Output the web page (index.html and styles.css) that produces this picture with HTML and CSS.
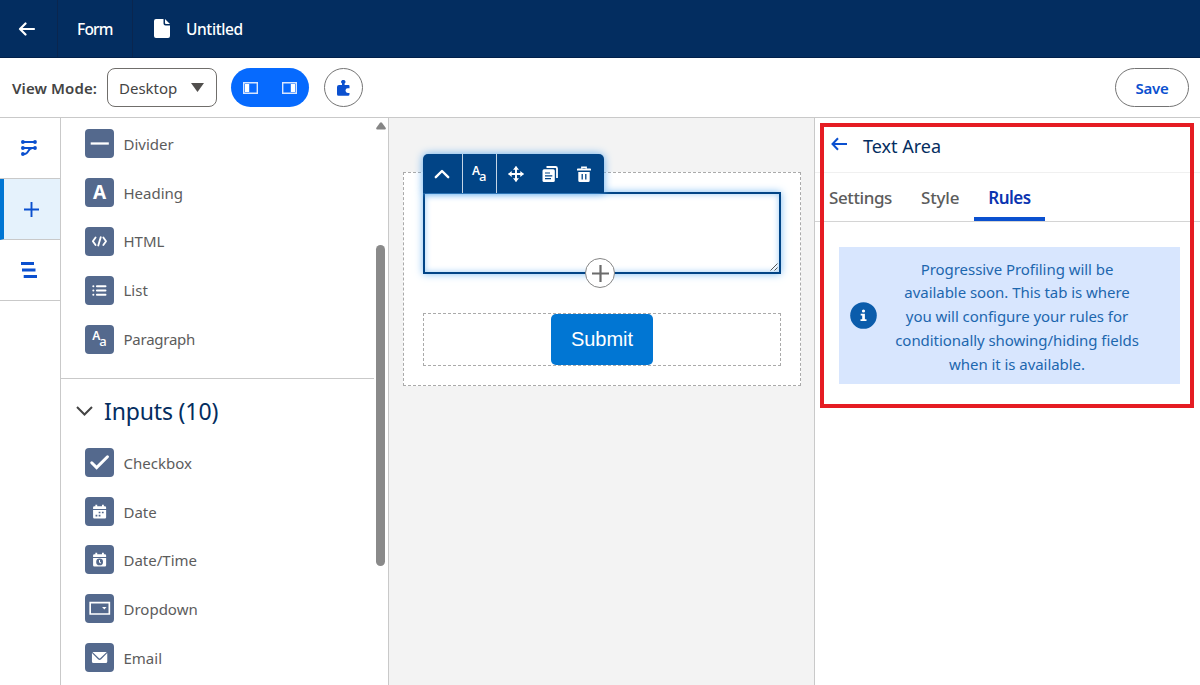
FILE: index.html
```html
<!DOCTYPE html>
<html lang="en">
<head>
<meta charset="utf-8">
<title>Form – Untitled</title>
<link rel="stylesheet" href="styles.css">
</head>
<body>
<div class="app">
  <header class="topbar">
    <div class="topbar-back"><svg width="18" height="14" viewBox="0 0 18 14" class="stroke"><path d="M16 7H2M7.500 1.500 2 7l5.500 5.500" stroke-width="2.200"/></svg></div>
    <div class="topbar-form"><span class="t-form">Form</span></div>
    <div class="topbar-title">
      <svg width="16" height="19" viewBox="0 0 16 19" fill="currentColor"><path d="M2 0h7.500v4.500a2 2 0 0 0 2 2H16V17a2 2 0 0 1-2 2H2a2 2 0 0 1-2-2V2a2 2 0 0 1 2-2zM11 0l5 5h-4a1 1 0 0 1-1-1z"/></svg>
      <span class="t-untitled">Untitled</span>
    </div>
  </header>

  <div class="toolbar">
    <span class="mode-label">View Mode:</span>
    <div class="select"><span>Desktop</span><svg width="13" height="9" viewBox="0 0 13 9"><path d="M0 0h13L6.500 9z" fill="#514f4d"/></svg></div>
    <div class="toggle">
      <svg width="15" height="12" viewBox="0 0 15 12"><path d="M.7.7h13.600v10.600H.7z" fill="none" stroke="#d8e6fe" stroke-width="1.400"/><path d="M2 2h4.200v8H2z" fill="#fff"/></svg>
      <svg width="15" height="12" viewBox="0 0 15 12"><path d="M.7.7h13.600v10.600H.7z" fill="none" stroke="#d8e6fe" stroke-width="1.400"/><path d="M8.800 2H13v8H8.800z" fill="#fff"/></svg>
    </div>
    <div class="round"><svg width="13" height="16" viewBox="0 0 13 16" fill="#0b50cf"><path d="M5 5V3.600a2.100 2.100 0 1 1 2.600 0V5h3.900a1 1 0 0 1 1 1v2.300h-1.700a2.300 2.300 0 1 0 0 4.600h1.700v1.300a1.500 1.500 0 0 1-1.500 1.500H1.500A1.500 1.500 0 0 1 0 14.200V7a2 2 0 0 1 2-2z"/></svg></div>
    <button class="save">Save</button>
  </div>

  <main class="workspace">
    <nav class="rail">
      <div class="rail-item"><svg width="16" height="16" viewBox="0 0 16 16" fill="none" stroke="#0b50cf" stroke-width="2"><path d="M2 2h12M2 8h12M2 14h1.500c4.500 0 3-6 8-6"/><g fill="#0b50cf" stroke="none"><circle cx="1.900" cy="2" r="1.900"/><circle cx="14" cy="2" r="1.900"/><circle cx="1.900" cy="8" r="1.900"/><circle cx="14" cy="8" r="1.900"/><circle cx="1.900" cy="14" r="1.900"/></g></svg></div>
      <div class="rail-item active"><svg width="15" height="15" viewBox="0 0 15 15"><path d="M7.500 0v15M0 7.500h15" stroke="#0b50cf" stroke-width="1.900"/></svg></div>
      <div class="rail-item"><svg width="16" height="16" viewBox="0 0 16 16" fill="#0b50cf"><path d="M0 0h13v3H0zM1 6.400h13.500v3H1zM2.700 13H16v3H2.700z"/></svg></div>
    </nav>

    <section class="palette">
      <div class="palette-list">
        <div class="group group-first">
          <div class="item"><span class="tile"><svg viewBox="0 0 28 28"><path d="M5.500 14h17.500" stroke="#fff" stroke-width="2.200"/></svg></span><span>Divider</span></div>
          <div class="item"><span class="tile letter">A</span><span>Heading</span></div>
          <div class="item"><span class="tile"><svg viewBox="0 0 28 28" class="stroke"><path d="M10.200 10.200 7.600 13.800l2.600 3.600M17.700 10.200l2.600 3.600-2.600 3.600M15.200 9.900l-2.400 7.900" stroke-width="1.800"/></svg></span><span>HTML</span></div>
          <div class="item"><span class="tile"><svg viewBox="0 0 28 28" class="stroke"><path d="M11.500 10h8.300M11.500 14h8.300M11.500 18h8.300M8 10h.1M8 14h.1M8 18h.1" stroke-width="1.900"/></svg></span><span>List</span></div>
          <div class="item"><span class="tile aa"><b>A</b><i>a</i></span><span class="tight">Paragraph</span></div>
        </div>
        <div class="group group-inputs">
          <h2 class="group-title"><svg width="17" height="10" viewBox="0 0 17 10"><path d="m1 1 7.500 7.500L16 1" fill="none" stroke="#444" stroke-width="2"/></svg><span>Inputs (10)</span></h2>
          <div class="item"><span class="tile"><svg viewBox="0 0 28 28"><path d="m6.500 14.300 4.700 4.700L21.700 8.500" fill="none" stroke="#fff" stroke-width="2.900" stroke-linecap="round"/></svg></span><span>Checkbox</span></div>
          <div class="item"><span class="tile"><svg viewBox="0 0 28 28"><path d="M9 9h1V7.500h1.800V9h4.600V7.500h1.800V9h1a1.200 1.200 0 0 1 1.200 1.200V11.500H7.800V10.200A1.200 1.200 0 0 1 9 9zM7.800 12.500h12.600V19.500a1.200 1.200 0 0 1-1.200 1.200H9a1.200 1.200 0 0 1-1.200-1.200z" fill="#fff"/><path d="M13.200 14.200h1.700v1.600h-1.700zM16.300 14.200H18v1.600h-1.700zM10.200 17.200h1.700v1.600h-1.700zM13.200 17.200h1.700v1.600h-1.700z" fill="#54698d"/></svg></span><span>Date</span></div>
          <div class="item"><span class="tile"><svg viewBox="0 0 28 28"><path d="M9 9h1V7.500h1.800V9h4.600V7.500h1.800V9h1a1.200 1.200 0 0 1 1.200 1.200V11.500H7.800V10.200A1.200 1.200 0 0 1 9 9zM7.800 12.500h12.600V19.500a1.200 1.200 0 0 1-1.200 1.200H9a1.200 1.200 0 0 1-1.200-1.200z" fill="#fff"/><circle cx="14.100" cy="16.300" r="3.300" fill="#54698d"/><path d="M14 14.500v2l1.300 1" fill="none" stroke="#fff"/></svg></span><span>Date/Time</span></div>
          <div class="item"><span class="tile"><svg viewBox="0 0 28 28"><path d="M5 8.300h18.500v11H5z" fill="none" stroke="#fff" stroke-width="1.600"/><path d="M16.500 12.500h4.300l-2.150 2.500z" fill="#fff"/></svg></span><span>Dropdown</span></div>
          <div class="item"><span class="tile"><svg viewBox="0 0 28 28" fill="#fff"><path d="M7.200 8.600h13.800l-6.300 6.100a.9.900 0 0 1-1.200 0zM6.700 9.700l5.900 6a2.100 2.100 0 0 0 3 0l5.900-6v8.200a1.500 1.500 0 0 1-1.500 1.500H8.200a1.500 1.500 0 0 1-1.500-1.500z"/></svg></span><span>Email</span></div>
        </div>
      </div>
      <div class="scrollbar"><svg width="10" height="8" viewBox="0 0 10 8"><path d="M4 .8q1-1.200 2 0L9.800 6q.3 1.500-1 1.500H1.200Q0 7.500.2 6z" fill="#858585"/></svg><div class="thumb"></div></div>
    </section>

    <section class="canvas">
      <div class="form-box">
        <div class="textarea-block">
          <div class="block-tools">
            <span class="tool"><svg width="16" height="10" viewBox="0 0 16 10" class="stroke"><path d="M1.800 8.200 8 2l6.200 6.200" stroke-width="2.400"/></svg></span>
            <span class="tool tool-aa aa"><b>A</b><i>a</i></span>
            <span class="tool tool-plain"><svg width="16" height="16" viewBox="0 0 16 16" class="stroke"><path d="M8 1.500v13M1.500 8h13" stroke-width="1.900"/><path d="M8 0 11 3.700H5zM8 16l3-3.700H5zM0 8l3.700-3v6zM16 8l-3.700-3v6z" fill="currentColor" stroke="none"/></svg></span>
            <span class="tool tool-plain"><svg width="16" height="16" viewBox="0 0 16 16"><path d="M4.500 1h9A1.500 1.500 0 0 1 15 2.500V12" fill="none" stroke="#fff" stroke-width="1.800"/><rect x=".5" y="3.300" width="12.300" height="12.700" rx="1.500" fill="#fff"/><path d="M3 7h5M3 9.800h7.300M3 12.600h6" stroke="#014486" stroke-width="1.200"/></svg></span>
            <span class="tool tool-plain"><svg width="14" height="16" viewBox="0 0 14 16"><path d="M4.800 2.700V1.200h4.400v1.500" fill="none" stroke="#fff" stroke-width="1.400"/><path d="M.8 2.400h12.400a.8.800 0 0 1 .8.800v1.300H0V3.200a.8.800 0 0 1 .8-.8zM1.300 5.900h11.400V14.500a1.500 1.500 0 0 1-1.500 1.500H2.800a1.500 1.500 0 0 1-1.500-1.500z" fill="#fff"/><path d="M5.200 8v5.500M8.800 8v5.500" stroke="#014486" stroke-width="1.300"/></svg></span>
          </div>
          <div class="textarea"><svg class="grip" width="8" height="8" viewBox="0 0 8 8"><path d="M.5 7.500l7-7M4.500 7.500l3-3" stroke="#555" stroke-width="1"/></svg></div>
          <div class="add"><svg width="17" height="17" viewBox="0 0 17 17"><path d="M8.500 0v17M0 8.500h17" stroke="#6b6b6b" stroke-width="2.200"/></svg></div>
        </div>
        <div class="submit-block"><button class="submit">Submit</button></div>
      </div>
    </section>

    <aside class="panel">
      <div class="panel-head"><svg width="17" height="14" viewBox="0 0 17 14"><path d="M16 7H1.800M7 1.300 1.500 7 7 12.700" fill="none" stroke="#0b50cf" stroke-width="2"/></svg><span>Text Area</span></div>
      <div class="tabs"><span class="tab tab-settings">Settings</span><span class="tab tab-style">Style</span><span class="tab tab-rules">Rules</span></div>
      <div class="notice">
        <svg width="27" height="27" viewBox="0 0 27 27"><circle cx="13.500" cy="13.500" r="13.300" fill="#0b5cab"/><circle cx="13.500" cy="9" r="1.600" fill="#fff"/><path d="M10.700 11.800h4.200v5.400h1.600V19h-6v-1.800h1.700v-3.600h-1.500z" fill="#fff"/></svg>
        <p><span>Progressive Profiling will be</span><span>available soon. This tab is where</span><span>you will configure your rules for</span><span>conditionally showing/hiding fields</span><span>when it is available.</span></p>
      </div>
      <div class="highlight"></div>
    </aside>
  </main>
</div>
</body>
</html>
```

FILE: styles.css
```css
* { box-sizing: border-box; }
body { margin: 0; font-family: "Noto Sans", "Open Sans", sans-serif; color: #444; }
svg { display: block; flex: none; }
button { font: inherit; padding: 0; }
.stroke { fill: none; stroke: currentColor; stroke-linecap: round; stroke-linejoin: round; color: #fff; }
.app { width: 1200px; height: 685px; display: flex; flex-direction: column; overflow: hidden; background: #fff; }

.topbar { height: 58px; flex: none; display: flex; background: #032d60; color: #fff; border-bottom: 1px solid #01204a; font-size: 15.500px; font-weight: 500; letter-spacing: -.3px; }
.topbar > div { display: flex; align-items: center; }
.topbar-back { width: 58px; padding-left: 18px; border-right: 1px solid #0a264f; }
.topbar-form { width: 75px; padding-left: 19px; border-right: 1px solid #0a264f; }
.t-form { letter-spacing: -.8px; }
.topbar-title { padding-left: 21px; gap: 16px; }
.t-untitled { letter-spacing: -.4px; }

.toolbar { height: 60px; flex: none; display: flex; align-items: center; padding: 0 11px 0 12px; border-bottom: 1px solid #c9c9c9; font-size: 15px; }
.mode-label { width: 95px; font-weight: 600; letter-spacing: .1px; white-space: nowrap; }
.select { width: 110px; height: 39px; border: 1px solid #706e6b; border-radius: 8px; display: flex; align-items: center; justify-content: space-between; padding: 0 12px 0 11px; }
.toggle { width: 78px; height: 39px; margin-left: 14px; border-radius: 20px; background: #066afe; display: flex; align-items: center; justify-content: space-between; padding: 0 12px; }
.round { width: 39px; height: 39px; margin-left: 15px; border: 1px solid #747474; border-radius: 50%; display: flex; align-items: center; justify-content: center; }
.save { width: 74px; height: 39px; margin-left: auto; border: 1px solid #747474; border-radius: 20px; background: #fff; color: #0b50cf; font-weight: 600; font-size: 15px; letter-spacing: -.2px; }

.workspace { flex: 1; min-height: 0; display: flex; }
.rail { width: 61px; border-right: 1px solid #c9c9c9; }
.rail-item { height: 61px; display: flex; align-items: center; justify-content: center; padding-right: 2px; border-bottom: 1px solid #c9c9c9; }
.rail-item.active { padding: 0 1px 0 0; background: #e5f2fc; border-left: 4px solid #0176d3; }

.palette { width: 328px; display: flex; border-right: 1px solid #c9c9c9; }
.palette-list { width: 313px; overflow: hidden; }
.group { padding-left: 24px; }
.group-first { height: 261px; padding-top: 1.500px; border-bottom: 1px solid #c9c9c9; }
.group-title { height: 59px; margin: 0 0 0 -9px; display: flex; align-items: center; gap: 11px; font-size: 23px; font-weight: 400; letter-spacing: -.15px; color: #032d60; padding-top: 4px; }
.item { height: 48.800px; display: flex; align-items: center; gap: 9.500px; font-size: 15px; color: #5c5c5c; }
.group-inputs .item > span:last-child { padding-top: 1px; }
.tight { letter-spacing: -.25px; }
.tile { width: 29px; height: 29px; flex: none; border-radius: 4px; background: #54698d; color: #fff; }
.tile svg { width: 29px; height: 29px; }
.letter { display: flex; align-items: center; justify-content: center; padding-bottom: 1px; font-weight: 700; font-size: 19px; line-height: 1; }
.aa { display: flex; align-items: center; justify-content: center; line-height: 1; color: #fff; }
.aa b { font-size: 12px; font-weight: 600; padding-bottom: 6px; }
.aa i { font-size: 13px; font-style: normal; font-weight: 500; padding-top: 5px; margin-left: -1px; }
.scrollbar { width: 14px; padding: 4px 0 0 2px; }
.thumb { width: 9px; height: 321px; margin-top: 115px; border-radius: 5px; background: #8a8a8a; }

.canvas { width: 425px; padding: 54px 13px 0 14px; background: #f3f3f3; }
.form-box { height: 214px; padding: 19px 19px 0; background: #fff; border: 1px dashed #aaa; }
.textarea-block { position: relative; height: 82px; }
.block-tools { position: absolute; left: 0; top: -38px; width: 181px; height: 39px; display: flex; background: #014486; border-radius: 5px 5px 0 0; box-shadow: 0 0 8px #62adf0; }
.tool { width: 39.500px; display: flex; align-items: center; justify-content: center; border-right: 1px solid #c5d5e5; }
.tool-aa { width: 34.500px; }
.tool-plain { width: 34.300px; border: 0; padding-left: 3px; }
.textarea { height: 82px; border: 2px solid #014486; background: #fff; box-shadow: 0 0 8px #7fbdf3, inset 0 0 6px #9bcbf5; display: flex; align-items: flex-end; justify-content: flex-end; padding: 1px; }
.add { position: absolute; left: 162px; top: 66px; width: 30px; height: 30px; border: 1px solid #858585; border-radius: 50%; background: #fff; display: flex; align-items: center; justify-content: center; }
.submit-block { height: 53px; margin-top: 39px; border: 1px dashed #aaa; display: flex; justify-content: center; }
.submit { width: 102px; height: 51px; border: 0; border-radius: 5px; background: #0176d3; color: #fff; font: 20px "Liberation Sans", sans-serif; }

.panel { position: relative; width: 386px; border-left: 1px solid #c9c9c9; }
.panel-head { height: 55px; display: flex; align-items: center; padding: 1px 0 0 16px; gap: 15px; font-size: 18px; color: #032d60; border-bottom: 1px solid #f0f0f0; }
.panel-head svg { margin-bottom: 4px; }
.tabs { height: 49px; display: flex; border-bottom: 1px solid #d4d4d4; font-size: 17px; font-weight: 500; color: #5c5c5c; }
.tab { display: flex; align-items: center; }
.tab-settings { width: 92px; padding-left: 14px; letter-spacing: -.4px; }
.tab-style { width: 67px; padding-left: 14px; letter-spacing: -.2px; }
.tab-rules { width: 71px; height: 48px; padding-top: 4px; justify-content: center; border-bottom: 4px solid #0b50cf; color: #0b34b0; font-weight: 600; letter-spacing: -.5px; }
.notice { width: 341px; height: 137px; margin: 25px 0 0 24px; padding-left: 11px; display: flex; align-items: center; gap: 18px; background: #d8e6fe; color: #1d67ae; }
.notice p { width: 244px; margin: 0; padding-top: 3px; display: flex; flex-direction: column; align-items: center; font-size: 15px; line-height: 23.700px; letter-spacing: -.05px; white-space: nowrap; }
.highlight { position: absolute; left: 5px; top: 5px; width: 374px; height: 285px; border: 4px solid #e51c23; }
```
